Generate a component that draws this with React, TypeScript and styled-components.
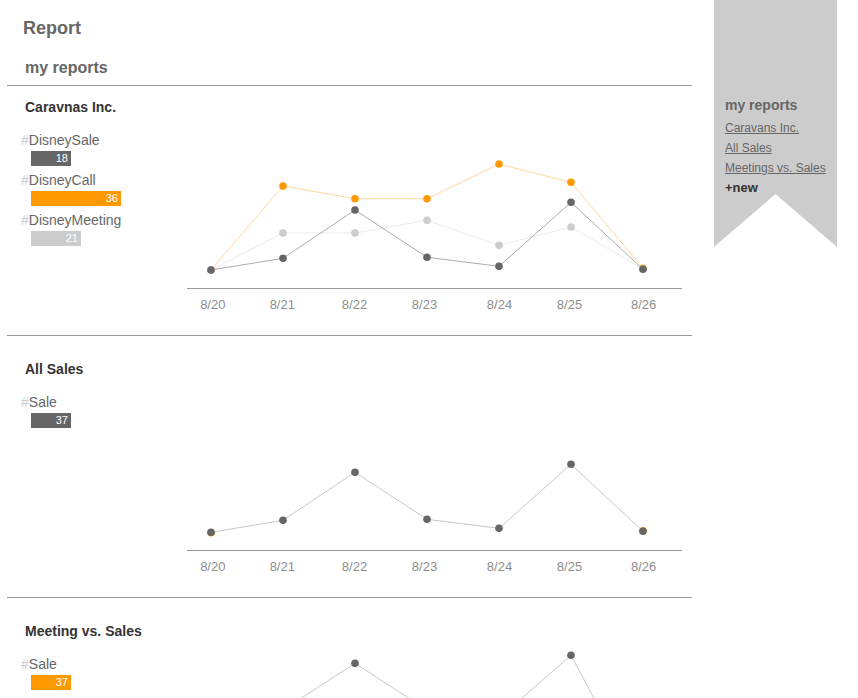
import React from 'react';
import styled, { createGlobalStyle } from 'styled-components';

const GlobalStyle = createGlobalStyle`
  html, body { margin: 0; padding: 0; background: #fff; overflow: hidden; }
  body { font-family: "Liberation Sans", Arial, Helvetica, sans-serif; }
  * { box-sizing: border-box; }
`;

const Page = styled.div`
  display: flex;
  align-items: flex-start;
  gap: 22px;
  padding-left: 7px;
`;

const Main = styled.main`
  width: 685px;
  flex: none;
`;

const Header = styled.header`
  padding: 17px 0 7px 16px;
  border-bottom: 1px solid #999;
`;

const PageTitle = styled.h1`
  margin: 0 0 19px;
  font-size: 18px;
  line-height: 22px;
  font-weight: bold;
  color: #666;
`;

const SubTitle = styled.h2`
  margin: 0 0 0 2px;
  font-size: 16px;
  line-height: 20px;
  font-weight: bold;
  color: #666;
`;

const Section = styled.section<{ $first?: boolean }>`
  padding-top: ${(p) => (p.$first ? 13 : 25)}px;
  border-bottom: 1px solid #999;
`;

const SectionTitle = styled.h3`
  margin: 0 0 18px 18px;
  font-size: 14px;
  line-height: 16px;
  font-weight: bold;
  color: #333;
`;

const Body = styled.div`
  display: flex;
  align-items: flex-start;
  height: 202px;
`;

const Legend = styled.ul`
  width: 180px;
  flex: none;
  margin: -1px 0 0;
  padding: 0 0 0 14px;
  list-style: none;
`;

const LegendItem = styled.li`
  margin-bottom: 6px;
`;

const Tag = styled.div`
  font-size: 14px;
  line-height: 16px;
  color: #666;
`;

const Hash = styled.span`
  color: #ccc;
`;

const Bar = styled.div<{ $color: string }>`
  margin: 3px 0 0 10px;
  height: 15px;
  background: ${(p) => p.$color};
  color: #fff;
  font-size: 11px;
  line-height: 15px;
  text-align: right;
  padding-right: 3px;
`;

const ChartSvg = styled.svg`
  flex: none;
  overflow: visible;
  display: block;
`;

const Ribbon = styled.aside`
  width: 123px;
  height: 247px;
  flex: none;
  background: #ccc;
  clip-path: polygon(0 0, 100% 0, 100% 100%, 50% calc(100% - 53px), 0 100%);
  padding: 97px 0 0 11px;
`;

const RibbonTitle = styled.h4`
  margin: 0 0 5px;
  font-size: 14px;
  line-height: 16px;
  font-weight: bold;
  color: #666;
`;

const RibbonNav = styled.nav`
  display: flex;
  flex-direction: column;
  align-items: flex-start;
`;

const RibbonLink = styled.a`
  font-size: 12px;
  line-height: 20px;
  color: #666;
  text-decoration: underline;
`;

const NewLink = styled.a`
  font-size: 13px;
  line-height: 20px;
  font-weight: bold;
  color: #333;
  text-decoration: none;
`;

type Series = { dot: string; line?: string; ys: (number | null)[] };
type LegendEntry = { name: string; value: number; width: number; color: string };
type Report = { title: string; legend: LegendEntry[]; series: Series[] };

const DATES = ['8/20', '8/21', '8/22', '8/23', '8/24', '8/25', '8/26'];
const LABEL_X = [25.8, 95.3, 167.5, 237.5, 312.5, 382.5, 456.7];
const X0 = 24;
const STEP = 72;
const AXIS_Y = 155;

const reports: Report[] = [
  {
    title: 'Caravnas Inc.',
    legend: [
      { name: 'DisneySale', value: 18, width: 40, color: '#666' },
      { name: 'DisneyCall', value: 36, width: 90, color: '#f90' },
      { name: 'DisneyMeeting', value: 21, width: 50, color: '#ccc' },
    ],
    series: [
      { dot: '#f90', line: 'rgba(255,153,0,0.38)', ys: [137, 53, 65.7, 65.7, 31, 49.3, 135.3] },
      { dot: '#ccc', line: '#ebebeb', ys: [137, 100, 100, 87.3, 112.3, 94, 136] },
      { dot: '#666', line: '#adadad', ys: [137, 125.3, 77, 124.3, 133.3, 69.3, 136.3] },
    ],
  },
  {
    title: 'All Sales',
    legend: [{ name: 'Sale', value: 37, width: 40, color: '#666' }],
    series: [
      { dot: '#f90', ys: [137.8, null, null, null, null, null, 135.8] },
      { dot: '#666', line: '#c8c8c8', ys: [137.3, 125.3, 77.3, 124.3, 133.3, 69.3, 136.3] },
    ],
  },
  {
    title: 'Meeting vs. Sales',
    legend: [{ name: 'Sale', value: 37, width: 40, color: '#f90' }],
    series: [{ dot: '#666', line: '#c8c8c8', ys: [66, 53, 6.3, 53, 61, -1.7, 133] }],
  },
];

function Chart({ series }: { series: Series[] }) {
  const px = (i: number) => X0 + STEP * i;
  return (
    <ChartSvg width={495} height={202} viewBox="0 0 495 202">
      {series.map((s, si) =>
        s.line ? (
          <polyline
            key={`l${si}`}
            points={s.ys.map((y, i) => `${px(i)},${y}`).join(' ')}
            fill="none"
            stroke={s.line}
            strokeWidth={1}
          />
        ) : null
      )}
      {series.map((s, si) =>
        s.ys.map((y, i) =>
          y === null ? null : <circle key={`c${si}-${i}`} cx={px(i)} cy={y} r={3.8} fill={s.dot} />
        )
      )}
      <line x1={0} y1={AXIS_Y + 0.5} x2={495} y2={AXIS_Y + 0.5} stroke="#999" strokeWidth={1} />
      {DATES.map((d, i) => (
        <text
          key={d}
          x={LABEL_X[i]}
          y={176}
          textAnchor="middle"
          fontFamily='"Liberation Sans", Arial, sans-serif'
          fontSize={13}
          fill="#8e8e8e"
        >
          {d}
        </text>
      ))}
    </ChartSvg>
  );
}

export default function App() {
  return (
    <>
      <GlobalStyle />
      <Page>
        <Main>
          <Header>
            <PageTitle>Report</PageTitle>
            <SubTitle>my reports</SubTitle>
          </Header>
          {reports.map((r, idx) => (
            <Section key={r.title} $first={idx === 0}>
              <SectionTitle>{r.title}</SectionTitle>
              <Body>
                <Legend>
                  {r.legend.map((l) => (
                    <LegendItem key={l.name}>
                      <Tag>
                        <Hash>#</Hash>
                        {l.name}
                      </Tag>
                      <Bar $color={l.color} style={{ width: l.width }}>
                        {l.value}
                      </Bar>
                    </LegendItem>
                  ))}
                </Legend>
                <Chart series={r.series} />
              </Body>
            </Section>
          ))}
        </Main>
        <Ribbon>
          <RibbonTitle>my reports</RibbonTitle>
          <RibbonNav>
            <RibbonLink href="#">Caravans Inc.</RibbonLink>
            <RibbonLink href="#">All Sales</RibbonLink>
            <RibbonLink href="#">Meetings vs. Sales</RibbonLink>
            <NewLink href="#">+new</NewLink>
          </RibbonNav>
        </Ribbon>
      </Page>
    </>
  );
}
